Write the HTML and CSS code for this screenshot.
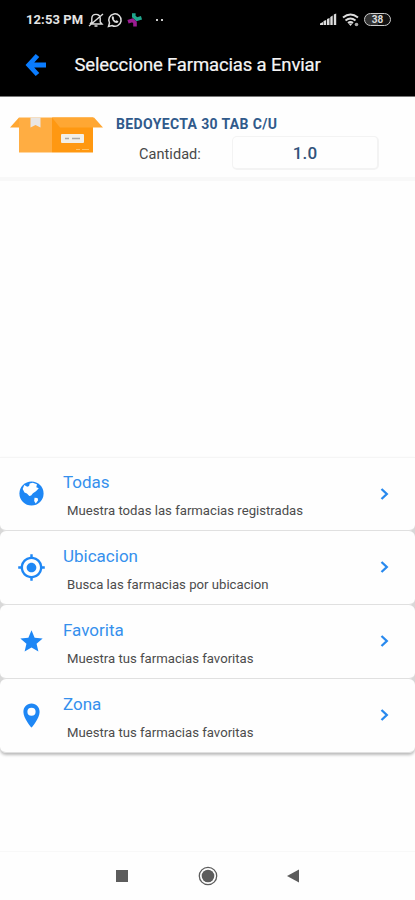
FILE: index.html
```html
<!DOCTYPE html>
<html lang="es">
<head>
<meta charset="utf-8">
<title>Seleccione Farmacias a Enviar</title>
<link rel="stylesheet" href="styles.css">
</head>
<body>
<header class="top">
  <div class="status">
    <span class="clock">12:53 PM</span>
    <svg class="bell" width="16" height="16" viewBox="0 0 16 16" fill="none" stroke="#ddd" stroke-width="1.4"><path d="M2 12h12l-1.800-2V6.500C12.200 1 3.800 1 3.800 6.500V10L2 12M6.500 14h3M15 2 1 14"/></svg>
    <svg class="wa" width="16" height="16" viewBox="0 0 16 16"><path d="M1.500 14.500l1-3.500a6.200 6.200 0 1 1 2.500 2.500z" fill="none" stroke="#ddd" stroke-width="1.500"/><path d="M5 4.500l1.300-.3.900 2-.6.900c.5.900 1.100 1.400 2 1.900l.9-.8 1.900 1-.4 1.300C8.500 12.500 3.800 8 5 4.500z" fill="#ddd"/></svg>
    <svg class="slack" width="16" height="16" viewBox="0 0 16 16" fill="none" stroke-width="3.600"><path d="M6.800 1.200v3.300l3 2.800 4.700-1.500" stroke="#1fa58c"/><path d="M1 9.800l4.500-1.600 2.500 2.300v4" stroke="#9b1c91"/></svg>
    <span class="dots"><i></i><i></i></span>
    <span class="space"></span>
    <svg class="signal" width="17" height="13" viewBox="0 0 17 13" fill="#ddd"><path d="M0 12v-1.500l3-1.500v3zM3.500 12V8l2.700-1v5zM7 12V6l2.500-1v7zM10.300 12V4l2.400-1.500V12zM13.800 12V1.500L16.200.5V12z"/></svg>
    <svg class="wifi" width="18" height="14" viewBox="0 0 18 14" fill="none" stroke="#ddd" stroke-width="2"><path d="M1 4.500q7.500-6 15 0M3.500 7.500q5-4 10 0M6 10q2.500-2 5 0"/><path d="M6.500 10.500L8.500 13l2-2.500z" fill="#ddd" stroke="none"/><circle cx="14.500" cy="11.500" r="1.800" fill="#aaa" stroke="none"/></svg>
    <span class="battery">38</span>
  </div>
  <div class="bar">
    <svg width="22" height="24" viewBox="0 0 22 24" fill="none" stroke="#0a7cff" stroke-width="4.800"><path d="M12.500 2.500 3.800 12l8.700 9.500M4 12h17"/></svg>
    <h1>Seleccione Farmacias a Enviar</h1>
  </div>
</header>
<section class="product">
  <svg class="box" width="93" height="37" viewBox="0 0 93 37"><path d="M9 .5h33v35H9z" fill="#ffad42"/><path d="M42 .5h41v35H42z" fill="#ff9811"/><path d="M9 .5 0 10.500h9zM42 .5h42l9 10H50z" fill="#ffa733"/><path d="M20.500 .5h10v10l-5-2.500-5 2.500z" fill="#e9e6e3"/><rect x="51" y="17" width="23" height="9" rx="1" fill="#f2efe8"/><path d="M55 21.500h4m3 0h8" stroke="#aaa9a5" stroke-width="1.500"/><path d="M66 32.500h4m2 0h7" stroke="#ffc164"/></svg>
  <div class="info">
    <h2>BEDOYECTA 30 TAB C/U</h2>
    <div class="qty"><label>Cantidad:</label><div class="field">1.0</div></div>
  </div>
</section>
<main class="list">
  <article class="row">
    <svg class="icon" viewBox="0 0 24 24"><circle cx="12" cy="12" r="10" fill="#1e87f5"/><path d="M6 5l2.500 1.500L10 5.800l.5-2 2.500-.6 3.500 1.200-.5 2.400 2 .8-2.300 2.600-2.500 1.500-1.500 2-1.500.3-2-2-2-.8-1.500-3zM14.500 15.500l2.500.3.500 1.800-2 2.600-1.300-2z" fill="#fff"/></svg>
    <div class="copy"><h3>Todas</h3><p>Muestra todas las farmacias registradas</p></div>
    <svg class="chev" viewBox="0 0 9 14"><path d="M1.500 2 6.800 7l-5.300 5"/></svg>
  </article>
  <article class="row">
    <svg class="icon" viewBox="0 0 24 24" fill="#1e87f5"><path d="M12 8c-2.210 0-4 1.790-4 4s1.790 4 4 4 4-1.790 4-4-1.790-4-4-4zm8.940 3A8.994 8.994 0 0 0 13 3.060V1h-2v2.060A8.994 8.994 0 0 0 3.060 11H1v2h2.060A8.994 8.994 0 0 0 11 20.940V23h2v-2.060A8.994 8.994 0 0 0 20.940 13H23v-2h-2.060zM12 19c-3.870 0-7-3.130-7-7s3.130-7 7-7 7 3.130 7 7-3.130 7-7 7z"/></svg>
    <div class="copy"><h3>Ubicacion</h3><p>Busca las farmacias por ubicacion</p></div>
    <svg class="chev" viewBox="0 0 9 14"><path d="M1.500 2 6.800 7l-5.300 5"/></svg>
  </article>
  <article class="row">
    <svg class="icon" viewBox="-1 -1 26 26" fill="#1e87f5"><path d="M12 17.270 18.180 21l-1.640-7.030L22 9.240l-7.190-.61L12 2 9.190 8.630 2 9.240l5.460 4.730L5.820 21z"/></svg>
    <div class="copy"><h3>Favorita</h3><p>Muestra tus farmacias favoritas</p></div>
    <svg class="chev" viewBox="0 0 9 14"><path d="M1.500 2 6.800 7l-5.300 5"/></svg>
  </article>
  <article class="row">
    <svg class="icon" viewBox="0 0 24 24" fill="#1e87f5"><path fill-rule="evenodd" d="M12 2C8 2 5.300 5 5.300 9c0 5.250 6.700 13 6.700 13s6.700-7.750 6.700-13c0-4-2.700-7-6.700-7zm0 3.500a3.400 3.400 0 1 1 0 6.800 3.400 3.400 0 0 1 0-6.800z"/></svg>
    <div class="copy"><h3>Zona</h3><p>Muestra tus farmacias favoritas</p></div>
    <svg class="chev" viewBox="0 0 9 14"><path d="M1.500 2 6.800 7l-5.300 5"/></svg>
  </article>
</main>
<nav class="nav">
  <svg width="14" height="14"><rect x="1" y="1" width="12" height="12" fill="#5c5c5c"/></svg>
  <svg width="20" height="20"><circle cx="10" cy="10" r="8.700" fill="none" stroke="#5c5c5c" stroke-width="1.300"/><circle cx="10" cy="10" r="6.300" fill="#5c5c5c"/></svg>
  <svg width="14" height="14"><path d="M1 7 13 .5v13z" fill="#5c5c5c"/></svg>
</nav>
</body>
</html>
```
FILE: styles.css
```css
* { box-sizing: border-box; }
body { margin: 0; width: 415px; height: 900px; overflow: hidden; display: flex; flex-direction: column; background: #fefefe; font-family: Roboto, "Liberation Sans", sans-serif; }
h1, h2, h3, p { margin: 0; white-space: nowrap; }
svg { display: block; flex: none; }
.top { height: 97px; background: #000; border-bottom: 1px solid #777; }
.status { height: 39px; padding: 0 24px 0 26px; display: flex; align-items: center; }
.clock { width: 58px; font-size: 13px; line-height: 16px; font-weight: 700; letter-spacing: .1px; color: #e4e4e4; white-space: nowrap; }
.bell { margin-left: 4px; }
.wa { margin-left: 3px; }
.slack { margin-left: 4px; }
.dots { display: flex; gap: 3px; margin-left: 13px; }
.dots i { width: 2px; height: 2px; background: #ccc; }
.space { flex: 1; }
.wifi { margin-left: 5px; }
.battery { width: 27px; height: 13px; margin-left: 4px; border: 1.5px solid #ccc; border-radius: 7px; color: #ddd; background: linear-gradient(90deg, #333 50%, #111 50%); font-size: 10px; font-weight: 700; line-height: 11px; text-align: center; }
.bar { display: flex; align-items: center; height: 51px; padding-left: 25px; gap: 27.500px; }
h1 { font-size: 18.500px; letter-spacing: -.140px; line-height: 24px; font-weight: 400; color: #f5f5f5; -webkit-text-stroke: .2px; }
.product { height: 84px; display: flex; padding: 20px 0 0 10px; border-bottom: 4px solid #f8f8f8; }
.info { margin-left: 13px; margin-top: -3px; }
h2 { font-size: 14px; letter-spacing: .360px; line-height: 20px; font-weight: 700; color: #305a8b; }
.qty { display: flex; align-items: center; height: 36px; margin-top: 2px; }
label { width: 93px; margin-left: 23px; font-size: 14.500px; letter-spacing: .06px; color: #484848; margin-top: 0; }
.field { width: 147px; height: 34px; border: 1px solid #f3f3f3; border-bottom-width: 2px; border-right-width: 2px; border-radius: 5px; margin-top: -2px; font-size: 17px; letter-spacing: .2px; font-weight: 500; color: #31527a; line-height: 33px; text-align: center; }
.list { margin-top: 276px; background: #d8d8d8; box-shadow: 0 2px 3px #bbb; border-radius: 0 0 6px 6px; }
.row { height: 73.900px; display: flex; align-items: center; padding: 0 0 0 17px; background: #fefefe; border-bottom: 1px solid #e0e0e0; border-radius: 6px; }
.row:first-child { border-top: 1px solid #f5f5f5; border-radius: 0 0 6px 6px; }
.icon { width: 29px; height: 29px; }
.copy { flex: 1; margin-left: 17px; padding-top: 4px; }
h3 { font-size: 17px; line-height: 24px; font-weight: 400; color: #3590ed; }
.copy p { margin: 7px 0 0 4px; font-size: 13.160px; line-height: 20px; color: #4c4c4c; }
.chev { width: 9px; height: 14px; margin-right: 26px; fill: none; stroke: #2889ee; stroke-width: 2.300; }
.nav { margin-top: auto; height: 49px; display: flex; justify-content: space-between; align-items: center; padding: 0 115px; border-top: 1px solid #f8f8f8; }
```
